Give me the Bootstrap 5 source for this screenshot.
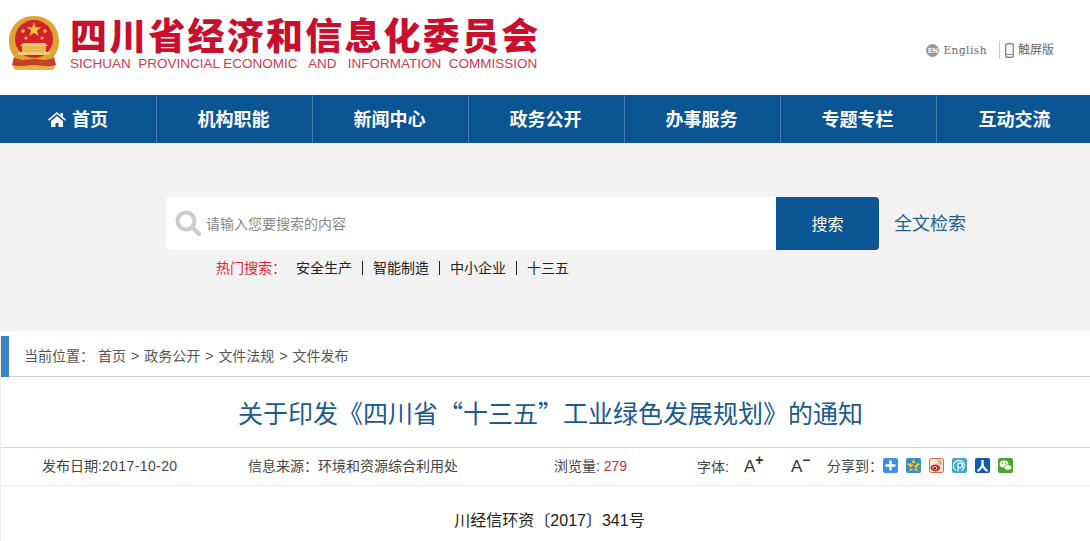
<!doctype html>
<html lang="zh-CN">
<head>
<meta charset="utf-8">
<title>关于印发《四川省“十三五”工业绿色发展规划》的通知</title>
<link href="https://cdn.jsdelivr.net/npm/bootstrap@5.3.3/dist/css/bootstrap.min.css" rel="stylesheet">
<style>
  html, body { height: 541px; overflow: hidden; }
  body { font-family: "Liberation Sans", "Noto Sans CJK SC", sans-serif; font-size: 14px; color: #444; background: #fff; }

  .site-top { height: 95px; padding-left: 8px; }
  .site-emblem { width: 52px; height: 56px; margin-top: 15px; flex: none; }
  .site-brand { margin-left: 10px; }
  .site-name { font-family: "Noto Sans CJK SC", sans-serif; font-weight: 900; font-size: 37px; line-height: 38px; letter-spacing: 2.2px; color: #c8102e; margin-top: 15px; white-space: nowrap; }
  .site-en { font-size: 13.5px; line-height: 16px; color: #cf3a4f; margin-top: 3px; white-space: pre; }
  .site-links { margin-top: 40px; margin-right: 36px; font-size: 12px; color: #666; height: 20px; }
  .en-dot { width: 13px; height: 13px; border-radius: 50%; background: #999; color: #fff; font-size: 7px; font-weight: 700; line-height: 13px; text-align: center; }
  .en-text { font-family: "DejaVu Serif", "Liberation Mono", serif; font-size: 10.5px; letter-spacing: .5px; margin: 2px 12px 0 4px; }
  .touch-link { border-left: 1px solid #ccc; padding-left: 5px; height: 18px; line-height: 18px; }

  .main-nav { height: 48px; background: #0b5592; }
  .main-nav a { width: 156px; height: 48px; padding-right: 2px; line-height: 46px; color: #fff; font-family: "Noto Sans CJK SC", sans-serif; font-weight: 700; font-size: 18px; text-align: center; text-decoration: none; border-right: 1px solid #3f7fb5; flex: none; }
  .main-nav a:first-child { width: 157px; padding-right: 0; }
  .main-nav a:last-child { border-right: 0; flex: 1; padding: 0 0 0 2px; }
  .main-nav svg { width: 18px; height: 16px; margin-right: 6px; vertical-align: -1px; }

  .search-band { height: 188px; background: #f2f2f2; padding: 54px 0 0 166px; }
  .search-box { width: 610px; height: 53px; background: #fff; border-radius: 4px 0 0 4px; padding: 1px 0 0 9px; color: #888; }
  .search-box svg { width: 26px; height: 26px; margin: -2px 5px 0 0; }
  .search-btn { width: 103px; height: 53px; background: #0b5592; color: #fff; font-size: 16px; border: 0; border-radius: 0 4px 4px 0; padding: 3px 0 0; }
  .search-all { color: #1f5f93; font-size: 18px; margin: 2px 0 0 15px; text-decoration: none; }
  .hot-words { margin: 8px 0 0 50px; font-size: 14px; line-height: 20px; color: #222; }
  .hot-words .hot-label { color: #e3262e; margin-right: 10px; }
  .hot-words a { color: #222; text-decoration: none; padding: 0 10px; border-right: 1px solid #222; line-height: 14px; display: inline-block; }
  .hot-words a:last-child { border-right: 0; }
  .hot-words .hot-label + a { padding-left: 0; }

  .article-wrap { border-left: 1px solid #eee; }
  .crumbs { height: 41px; margin-top: 5px; border-bottom: 1px solid #ccc; font-size: 14px; color: #555; }
  .crumb-bar { width: 8px; height: 41px; background: #3b83c0; margin-right: 15px; align-self: flex-start; }
  .crumb-path { padding-top: 1px; }
  .crumb-path span { margin-left: 5px; }
  .crumb-path span:first-child { margin-left: 0; margin-right: -1px; }
  .article-title { height: 71px; margin: 0; padding-left: 10px; line-height: 70px; font-family: "Noto Sans CJK SC", sans-serif; font-size: 25px; font-weight: 400; text-align: center; color: #1a5a8e; border-bottom: 1px solid #d5d5d5; }
  .article-meta { height: 38px; border-bottom: 1px solid #e5e5e5; font-size: 14px; color: #444; white-space: nowrap; }
  .meta-date { margin-left: 41px; width: 206px; }
  .meta-date span { letter-spacing: .4px; }
  .meta-source { width: 306px; }
  .meta-views { width: 143px; }
  .meta-views b { color: #c9302c; font-weight: 400; }
  .meta-font { width: 130px; }
  .size-btn { font-size: 17px; color: #333; margin-left: 15px; display: inline-block; width: 32px; }
  .size-btn sup { font-size: 14px; font-weight: 700; top: -.5em; }
  .share-icons { gap: 8px; margin-top: -3px; }
  .share-icons svg { width: 15px; height: 15px; display: block; }
  .doc-number { text-align: center; padding-left: 8px; font-size: 16px; color: #222; margin: 23px 0 0; line-height: 24px; }
  .doc-next { font-size: 16px; color: #222; margin: 7px 0 0 80px; line-height: 24px; }
</style>
</head>
<body>

<header class="site-top d-flex justify-content-between align-items-start">
  <div class="d-flex">
    <svg class="site-emblem" viewBox="0 0 52 56" aria-hidden="true">
      <path d="M26 1C11 1 1 12 1 26c0 9 4 16 10 20l-4 7h38l-4-7c6-4 10-11 10-20C51 12 41 1 26 1z" fill="#dda432"/>
      <circle cx="26" cy="24" r="19" fill="#d3222a"/>
      <path d="M26 7l1.800 5.300h5.600l-4.500 3.300 1.700 5.400-4.600-3.300-4.600 3.300 1.700-5.400-4.500-3.300h5.600z" fill="#f4c542"/>
      <circle cx="15" cy="16" r="1.800" fill="#f4c542"/><circle cx="37" cy="16" r="1.800" fill="#f4c542"/>
      <circle cx="18" cy="23" r="1.500" fill="#f4c542"/><circle cx="34" cy="23" r="1.500" fill="#f4c542"/>
      <path d="M12 31l3-3h22l3 3z" fill="#f0cd74"/>
      <path d="M14 31h24v6H14z" fill="#e8b94e"/>
      <path d="M10 37h32v3H10z" fill="#f0cd74"/>
      <path d="M6 42c7 5 13 2 20 2s13 3 20-2l2 8c-7 3-14 0-22 0s-15 3-22 0z" fill="#c8402c"/>
      <path d="M4 50c7 3 14 1 22 1s15 2 22-1l-3 5H7z" fill="#e5b445"/>
    </svg>
    <div class="site-brand">
      <div class="site-name">四川省经济和信息化委员会</div>
      <div class="site-en">SICHUAN  PROVINCIAL ECONOMIC   AND   INFORMATION  COMMISSION</div>
    </div>
  </div>
  <div class="site-links d-flex align-items-center">
    <span class="en-dot">EN</span>
    <span class="en-text">English</span>
    <span class="touch-link d-flex align-items-center">
      <svg width="9" height="15" viewBox="0 0 9 15" class="me-1" aria-hidden="true"><rect x=".7" y=".7" width="7.600" height="13.600" rx="1.400" fill="none" stroke="#888" stroke-width="1.400"/><path d="M1 11.500h7" stroke="#888"/></svg>触屏版
    </span>
  </div>
</header>

<nav class="main-nav d-flex">
  <a href="#"><svg viewBox="0 0 18 16" aria-hidden="true"><path d="M9 1L0 8.500l1 1.200L9 3l8 6.700 1-1.200-3-2.500V2h-2.500v2.200zM3 10.200V16h4.500v-4h3v4H15v-5.800L9 5z" fill="#fff"/></svg>首页</a>
  <a href="#">机构职能</a>
  <a href="#">新闻中心</a>
  <a href="#">政务公开</a>
  <a href="#">办事服务</a>
  <a href="#">专题专栏</a>
  <a href="#">互动交流</a>
</nav>

<section class="search-band">
  <div class="d-flex align-items-center">
    <div class="search-box d-flex align-items-center">
      <svg viewBox="0 0 26 26" aria-hidden="true"><circle cx="11" cy="11" r="8.500" fill="none" stroke="#c9ccd2" stroke-width="4"/><path d="M17.500 17.500L24 24" stroke="#c9ccd2" stroke-width="4.500" stroke-linecap="round"/></svg>
      请输入您要搜索的内容
    </div>
    <button type="button" class="search-btn">搜索</button>
    <a class="search-all" href="#">全文检索</a>
  </div>
  <div class="hot-words">
    <span class="hot-label">热门搜索：</span><a href="#">安全生产</a><a href="#">智能制造</a><a href="#">中小企业</a><a href="#">十三五</a>
  </div>
</section>

<main class="article-wrap">
  <div class="crumbs d-flex align-items-center">
    <div class="crumb-bar"></div>
    <div class="crumb-path">
      <span>当前位置：</span><span>首页</span><span>&gt;</span><span>政务公开</span><span>&gt;</span><span>文件法规</span><span>&gt;</span><span>文件发布</span>
    </div>
  </div>
  <h1 class="article-title">关于印发《四川省“十三五”工业绿色发展规划》的通知</h1>
  <div class="article-meta d-flex align-items-center">
    <div class="meta-date">发布日期:<span>2017-10-20</span></div>
    <div class="meta-source">信息来源：环境和资源综合利用处</div>
    <div class="meta-views">浏览量: <b>279</b></div>
    <div class="meta-font">字体:<span class="size-btn">A<sup>+</sup></span><span class="size-btn">A<sup>−</sup></span></div>
    <div>分享到：</div>
    <div class="share-icons d-flex">
      <svg viewBox="0 0 15 15" aria-hidden="true"><rect width="15" height="15" rx="2" fill="#3d8fe0"/><path d="M6.200 2.500h2.600v3.700h3.700v2.600H8.800v3.700H6.200V8.800H2.500V6.200h3.700z" fill="#fff"/></svg>
      <svg viewBox="0 0 15 15" aria-hidden="true"><rect width="15" height="15" rx="2" fill="#2f8fc9"/><path d="M7.500 .8l2 4.400 4.900.5-3.700 3.200 1.100 4.800-4.300-2.500-4.300 2.500 1.100-4.800L.6 5.700l4.900-.5z" fill="#f7c52c"/><path d="M5.300 5.800h4.400L5.600 10h4.200" fill="none" stroke="#3a7ab8" stroke-width="1.300"/></svg>
      <svg viewBox="0 0 15 15" aria-hidden="true"><rect width="15" height="15" rx="2" fill="#f6e6d8"/><rect x=".5" y=".5" width="14" height="14" rx="2" fill="none" stroke="#d9683f"/><ellipse cx="6.300" cy="9.800" rx="4.800" ry="3.400" fill="#d8232a"/><ellipse cx="5.800" cy="10" rx="2.400" ry="1.800" fill="#fff"/><circle cx="5.600" cy="10.200" r="1.200" fill="#222"/><path d="M8.500 3c2.500-.5 4 1.200 3.600 3.800M8.800 5c1-.2 1.600.4 1.500 1.400" fill="none" stroke="#e8862e" stroke-width="1.100"/></svg>
      <svg viewBox="0 0 15 15" aria-hidden="true"><rect width="15" height="15" rx="2" fill="#3fa7c4"/><path d="M4 12.500A5.500 5.500 0 1 1 9.500 12.700" fill="none" stroke="#fff" stroke-width="1.200"/><path d="M6 13.500V5.200h2.200a2.200 2.200 0 0 1 0 4.400H6.800" fill="none" stroke="#fff" stroke-width="1.300"/></svg>
      <svg viewBox="0 0 15 15" aria-hidden="true"><rect width="15" height="15" rx="2" fill="#1459a8"/><path d="M7.500 2v3C7.500 8.500 5 11.500 2.500 13M7.500 5c0 3.500 2.500 6.500 5 8" fill="none" stroke="#fff" stroke-width="2.200"/></svg>
      <svg viewBox="0 0 15 15" aria-hidden="true"><rect width="15" height="15" rx="2" fill="#4aa52e"/><ellipse cx="6" cy="6" rx="4.400" ry="3.500" fill="#fff"/><ellipse cx="10" cy="9.500" rx="3.600" ry="2.800" fill="#fff" stroke="#4aa52e" stroke-width=".7"/><circle cx="4.400" cy="5.200" r=".7" fill="#4aa52e"/><circle cx="7.400" cy="5.200" r=".7" fill="#4aa52e"/></svg>
    </div>
  </div>
  <p class="doc-number">川经信环资〔2017〕341号</p>
  <p class="doc-next">各</p>
</main>

</body>
</html>
